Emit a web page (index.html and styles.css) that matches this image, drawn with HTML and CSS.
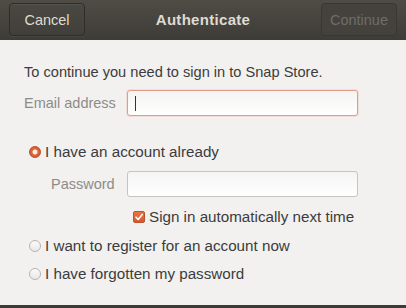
FILE: index.html
```html
<!DOCTYPE html>
<html>
<head>
<meta charset="utf-8">
<link rel="stylesheet" href="styles.css">
</head>
<body>
<div class="dialog">
  <header class="headerbar">
    <button class="hb-btn">Cancel</button>
    <div class="title">Authenticate</div>
    <button class="hb-btn disabled">Continue</button>
  </header>
  <main class="content">
    <p class="intro">To continue you need to sign in to Snap Store.</p>
    <div class="field-row email-row">
      <label class="field-label">Email address</label>
      <div class="entry focus"><span class="caret"></span></div>
    </div>
    <div class="option-row first">
      <span class="radio checked"></span>
      <span class="option-text">I have an account already</span>
    </div>
    <div class="field-row pw-row">
      <label class="field-label indent">Password</label>
      <div class="entry"></div>
    </div>
    <div class="check-row">
      <span class="checkbox">
        <svg width="10" height="10" viewBox="0 0 10 10"><path d="M2 5.2 L4.2 7.4 L8.2 2.6" fill="none" stroke="#fff" stroke-width="1.6" stroke-linecap="round" stroke-linejoin="round"/></svg>
      </span>
      <span class="option-text">Sign in automatically next time</span>
    </div>
    <div class="option-row second">
      <span class="radio"></span>
      <span class="option-text">I want to register for an account now</span>
    </div>
    <div class="option-row third">
      <span class="radio"></span>
      <span class="option-text">I have forgotten my password</span>
    </div>
  </main>
  <div class="bottom-edge"></div>
</div>
</body>
</html>
```
FILE: styles.css
```css
* { box-sizing: border-box; }
html, body { margin: 0; padding: 0; }
body {
  width: 406px;
  height: 308px;
  overflow: hidden;
  background: #f2f1f0;
  font-family: "Liberation Sans", Arial, sans-serif;
  font-size: 14.5px;
  color: #3c3c3c;
}
.dialog {
  height: 308px;
  display: flex;
  flex-direction: column;
}
.headerbar {
  height: 40px;
  flex: none;
  display: flex;
  align-items: center;
  justify-content: space-between;
  padding: 2px 9px 3px 9px;
  background: linear-gradient(#4f4c46, #3e3c37);
}
.hb-btn {
  width: 76px;
  height: 33px;
  border: 1px solid #2f2d29;
  border-radius: 4px;
  background: linear-gradient(#4a4842, #413f3a);
  box-shadow: inset 0 1px rgba(255,255,255,0.06), 0 1px rgba(255,255,255,0.05);
  color: #dfdbd2;
  font-family: "Liberation Sans", Arial, sans-serif;
  font-size: 14.5px;
  padding: 0;
}
.hb-btn.disabled {
  color: #6f6d68;
  background: #44423d;
  border-color: #393733;
  box-shadow: none;
}
.title {
  color: #dfdbd2;
  font-weight: bold;
  font-size: 15px;
  letter-spacing: 0.3px;
}
.content {
  flex: 1;
  padding: 0 0 0 24px;
}
.intro {
  margin: 22px 0 0 0;
  line-height: 20px;
  height: 20px;
  font-size: 14.6px;
}
.field-row {
  display: flex;
  align-items: center;
  height: 26px;
}
.email-row { margin-top: 8px; }
.pw-row { margin-top: 9px; }
.field-label {
  width: 103px;
  color: #8e8c88;
}
.field-label.indent { padding-left: 27px; }
.entry {
  width: 231px;
  height: 26px;
  border: 1px solid #c7c4bf;
  border-radius: 3px;
  background: linear-gradient(#f4f4f3, #ffffff);
  display: flex;
  align-items: center;
  padding-left: 7px;
}
.entry.focus {
  border-color: #e39b8a;
  box-shadow: 0 0 0 1px rgba(233,84,32,0.12);
}
.caret {
  width: 1px;
  height: 15px;
  background: #333;
}
.option-row, .check-row {
  display: flex;
  align-items: center;
  height: 20px;
}
.option-row { padding-left: 5px; }
.option-row.first { margin-top: 26px; }
.option-row.second { margin-top: 9px; }
.option-row.third { margin-top: 8px; }
.check-row { margin-top: 10px; padding-left: 109px; }
.radio {
  width: 12px;
  height: 12px;
  border-radius: 50%;
  border: 1px solid #b8b5af;
  background: linear-gradient(#fafafa, #e9e8e6);
  margin-right: 4px;
  flex: none;
}
.radio.checked {
  border: 1px solid #b5512c;
  background: radial-gradient(circle, #fbe9e0 0, #fbe9e0 2.2px, #df6a3c 2.8px, #c95a30 6px);
}
.checkbox {
  width: 12px;
  height: 12px;
  border-radius: 2px;
  border: 1px solid #b7532d;
  background: linear-gradient(#ea7445, #d45a2e);
  margin-right: 4px;
  display: flex;
  align-items: center;
  justify-content: center;
  flex: none;
}
.option-text { line-height: 20px; font-size: 15.2px; }
.bottom-edge {
  height: 3px;
  flex: none;
  background: #3c3b37;
}
```
